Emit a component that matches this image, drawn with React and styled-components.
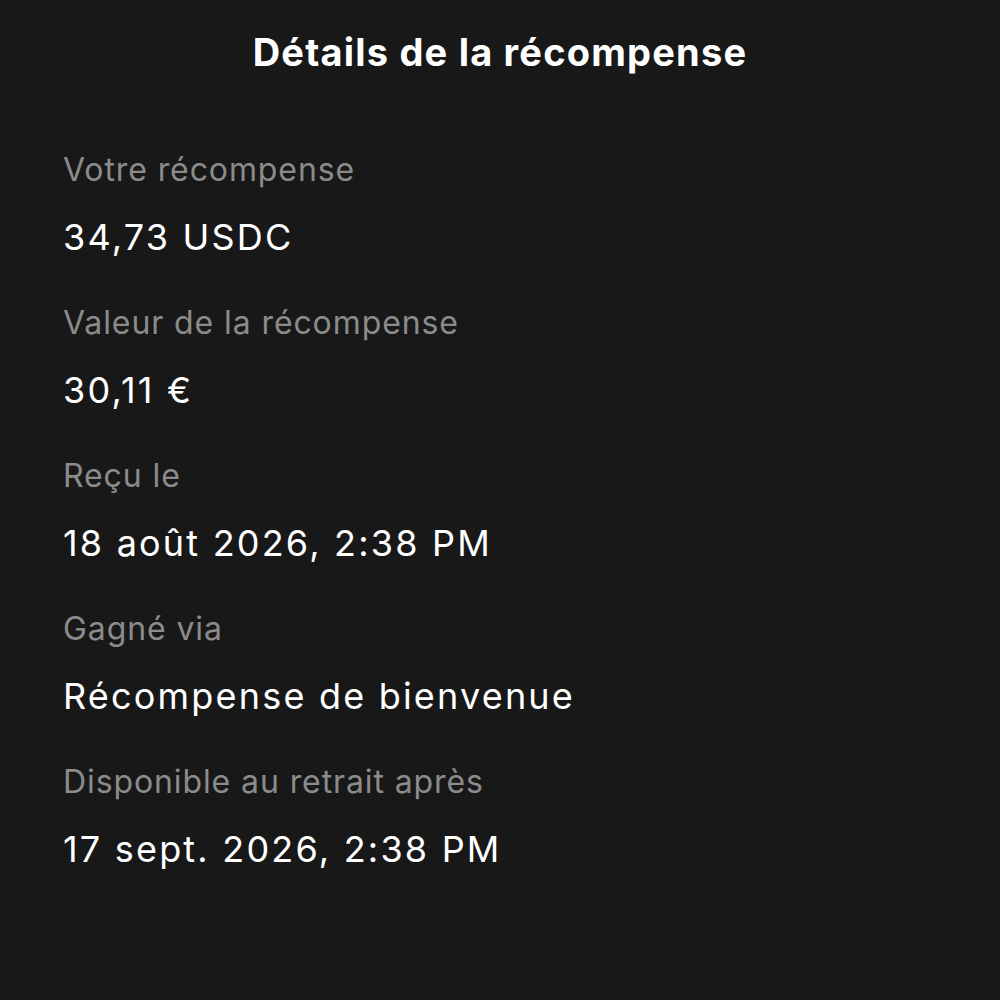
import React from "react";
import styled, { createGlobalStyle } from "styled-components";

const Global = createGlobalStyle`
  html, body { margin: 0; padding: 0; background: #181818; }
  body { font-family: Inter, "Noto Sans", sans-serif; -webkit-font-smoothing: antialiased; }
`;

const Page = styled.div`
  width: 1000px;
  height: 1000px;
  background: #181818;
  box-sizing: border-box;
  padding: 28px 63px 0;
  display: flex;
  flex-direction: column;
`;

const Title = styled.h1`
  margin: 0;
  text-align: center;
  color: #ffffff;
  font-size: 38px;
  font-weight: 700;
  line-height: 48px;
  letter-spacing: 1.2px;
`;

const List = styled.dl`
  margin: 72px 0 0;
  display: flex;
  flex-direction: column;
  gap: 42px;
`;

const Item = styled.div`
  display: flex;
  flex-direction: column;
  gap: 23px;
`;

const Label = styled.dt`
  color: #8b8b8b;
  font-size: 32px;
  line-height: 44px;
  letter-spacing: 0.9px;
`;

const Value = styled.dd`
  margin: 0;
  color: #ffffff;
  font-size: 36px;
  line-height: 44px;
  letter-spacing: 2.2px;
`;

const rows = [
  ["Votre récompense", "34,73 USDC"],
  ["Valeur de la récompense", "30,11 €"],
  ["Reçu le", "18 août 2026, 2:38 PM"],
  ["Gagné via", "Récompense de bienvenue"],
  ["Disponible au retrait après", "17 sept. 2026, 2:38 PM"],
];

export default function App() {
  return (
    <>
      <Global />
      <Page>
        <Title>Détails de la récompense</Title>
        <List>
          {rows.map(([l, v]) => (
            <Item key={l}>
              <Label>{l}</Label>
              <Value>{v}</Value>
            </Item>
          ))}
        </List>
      </Page>
    </>
  );
}
